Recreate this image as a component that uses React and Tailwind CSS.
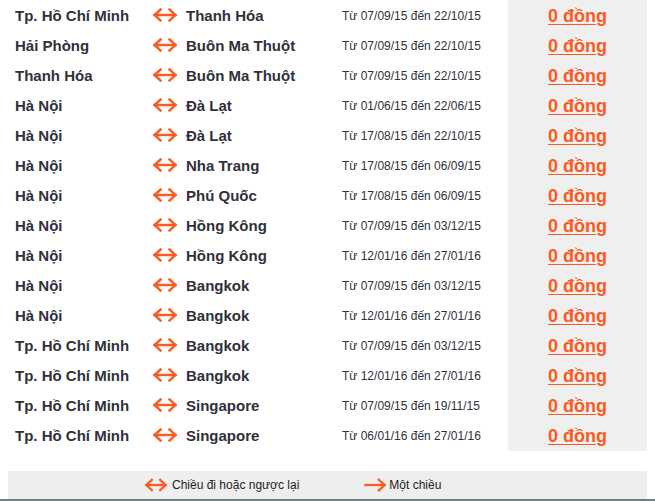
import React from 'react';

const routes = [
  ['Tp. Hồ Chí Minh', 'Thanh Hóa', 'Từ 07/09/15 đến 22/10/15'],
  ['Hải Phòng', 'Buôn Ma Thuột', 'Từ 07/09/15 đến 22/10/15'],
  ['Thanh Hóa', 'Buôn Ma Thuột', 'Từ 07/09/15 đến 22/10/15'],
  ['Hà Nội', 'Đà Lạt', 'Từ 01/06/15 đến 22/06/15'],
  ['Hà Nội', 'Đà Lạt', 'Từ 17/08/15 đến 22/10/15'],
  ['Hà Nội', 'Nha Trang', 'Từ 17/08/15 đến 06/09/15'],
  ['Hà Nội', 'Phú Quốc', 'Từ 17/08/15 đến 06/09/15'],
  ['Hà Nội', 'Hồng Kông', 'Từ 07/09/15 đến 03/12/15'],
  ['Hà Nội', 'Hồng Kông', 'Từ 12/01/16 đến 27/01/16'],
  ['Hà Nội', 'Bangkok', 'Từ 07/09/15 đến 03/12/15'],
  ['Hà Nội', 'Bangkok', 'Từ 12/01/16 đến 27/01/16'],
  ['Tp. Hồ Chí Minh', 'Bangkok', 'Từ 07/09/15 đến 03/12/15'],
  ['Tp. Hồ Chí Minh', 'Bangkok', 'Từ 12/01/16 đến 27/01/16'],
  ['Tp. Hồ Chí Minh', 'Singapore', 'Từ 07/09/15 đến 19/11/15'],
  ['Tp. Hồ Chí Minh', 'Singapore', 'Từ 06/01/16 đến 27/01/16'],
];

const DoubleArrow = ({ className }) => (
  <svg className={className} viewBox="0 0 26 14" fill="none" stroke="#fb5a22" strokeWidth={2.4} strokeLinecap="square">
    <path d="M2.5 7h21" />
    <path d="M8.5 1.5 2.5 7l6 5.5" />
    <path d="M17.5 1.5 23.5 7l-6 5.5" />
  </svg>
);

const RightArrow = ({ className }) => (
  <svg className={className} viewBox="0 0 24 14" fill="none" stroke="#fb5a22" strokeWidth={2.4} strokeLinecap="square">
    <path d="M1.5 7h20" />
    <path d="M15.5 1.5 21.5 7l-6 5.5" />
  </svg>
);

export default function App() {
  return (
    <div className="w-[655px] h-[501px] bg-white font-['Liberation_Sans',Arial,sans-serif] overflow-hidden">
      <div>
        {routes.map(([from, to, date], i) => (
          <div key={i} className="flex h-[30px] items-center">
            <div className="w-[152px] pl-[15px] pt-[2px] text-[15px] font-bold text-[#30303a]">{from}</div>
            <div className="w-[34px] flex items-center">
              <DoubleArrow className="w-[26px] h-[14px]" />
            </div>
            <div className="w-[156px] pt-[2px] text-[15px] font-bold text-[#30303a]">{to}</div>
            <div className="w-[166px] pt-[2px] text-[12px] text-[#30303a]">{date}</div>
            <div className="w-[139px] h-full pt-[2px] bg-[#efefef] flex items-center justify-center">
              <a href="#" className="text-[18px] font-bold text-[#fb5a22] underline underline-offset-2">0 đồng</a>
            </div>
          </div>
        ))}
        <div className="flex h-px">
          <div className="w-[508px]" />
          <div className="w-[139px] bg-[#efefef]" />
        </div>
      </div>
      <div className="mt-5 ml-2 w-[639px] h-[28px] bg-[#eeeeee] flex items-center text-[12px] text-[#222]">
        <DoubleArrow className="ml-[136px] w-[24px] h-[14px] mr-1" />
        <span>Chiều đi hoặc ngược lại</span>
        <RightArrow className="ml-[65px] w-[23px] h-[14px] mr-[2px]" />
        <span>Một chiều</span>
      </div>
      <div className="h-[2px] bg-[#6b7f8b]" />
    </div>
  );
}
